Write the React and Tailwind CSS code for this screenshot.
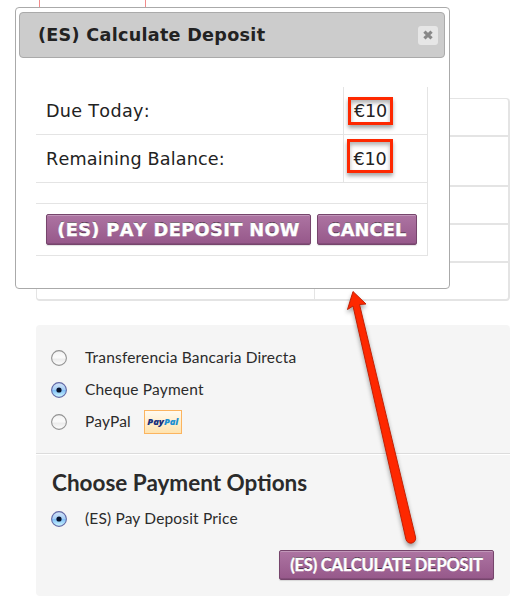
import React from 'react';

const PAYMENT_METHODS = [
  { id: 'bacs', label: 'Transferencia Bancaria Directa' },
  { id: 'cheque', label: 'Cheque Payment', checked: true },
  { id: 'paypal', label: 'PayPal', logo: true },
];

const BUTTON =
  'flex shrink-0 items-center justify-center whitespace-nowrap rounded-[2px] border border-[#76456c] bg-linear-to-b from-[#ad74a2] to-[#96588a] font-bold text-white shadow-[inset_0_1px_0_rgba(255,255,255,0.25),inset_0_-1px_0_rgba(0,0,0,0.12),0_1px_1px_rgba(0,0,0,0.12)] [-webkit-text-stroke:0.4px_white] [text-shadow:0_-1px_0_rgba(0,0,0,0.6)]';

const MARKER =
  'flex items-center justify-center border-[3px] border-[#fe2800] shadow-[0_3px_4px_rgba(0,0,0,0.35),inset_0_3px_4px_rgba(0,0,0,0.3)]';

function Radio({ checked }) {
  return (
    <svg className="h-4 w-4 shrink-0" viewBox="0 0 16 16" role="radio" aria-checked={Boolean(checked)}>
      <defs>
        <linearGradient id="radio-off" x1="0" y1="0" x2="0" y2="1">
          <stop offset="0" stopColor="#f0f0f0" />
          <stop offset="0.45" stopColor="#fbfbfb" />
          <stop offset="0.6" stopColor="#ececec" />
          <stop offset="1" stopColor="#ffffff" />
        </linearGradient>
        <linearGradient id="radio-on" x1="0" y1="0" x2="0" y2="1">
          <stop offset="0" stopColor="#d5e5f8" />
          <stop offset="0.48" stopColor="#a5cef6" />
          <stop offset="0.52" stopColor="#80bff6" />
          <stop offset="1" stopColor="#d4fbff" />
        </linearGradient>
      </defs>
      <circle
        cx="8"
        cy="8"
        r="7.4"
        fill={checked ? 'url(#radio-on)' : 'url(#radio-off)'}
        stroke={checked ? '#6268a5' : '#929292'}
        strokeWidth="1.1"
      />
      {checked ? <circle cx="8" cy="8" r="2.6" fill="#06122b" /> : null}
    </svg>
  );
}

function PaypalLogo() {
  return (
    <span className="ml-[13px] flex h-6 w-[38px] items-center justify-center border border-[#fbb45f] bg-linear-to-b from-[#fffaf0] to-[#ffe3ae] font-['Open_Sans',sans-serif] text-[9.5px] font-extrabold italic leading-none tracking-[-0.1px]">
      <span className="text-[#17307c]">Pay</span>
      <span className="text-[#1a8fd2]">Pal</span>
    </span>
  );
}

/** Order table that stays behind the dialog. */
function OrderTable() {
  return (
    <div className="ml-9 flex h-[203px] w-[474px] flex-col rounded-[4px] border border-r-2 border-b-2 border-[#e4e4e4]">
      <div className="h-[38px] border-b-2 border-[#e4e4e4]" />
      <div className="h-[50px] border-b-2 border-[#e4e4e4]" />
      <div className="h-[38px] border-b-2 border-[#e4e4e4]" />
      <div className="h-[38px] border-b-2 border-[#e4e4e4]" />
      <div className="ml-[277px] flex-1 border-l border-[#e4e4e4]" />
    </div>
  );
}

function PaymentBox() {
  return (
    <div className="ml-9 mt-6 h-[271px] w-[474px] rounded-[4px] bg-[#f5f5f5] font-[Lato,sans-serif] text-[#2b2b2b]">
      <ul className="flex h-[129px] flex-col border-b border-[#dcdcdc] pl-[15px] pt-[17px] text-[15.5px] tracking-[0.17px]">
        {PAYMENT_METHODS.map((m) => (
          <li key={m.id} className="flex h-8 items-center">
            <Radio checked={m.checked} />
            <span className="ml-[18px] whitespace-nowrap">{m.label}</span>
            {m.logo ? <PaypalLogo /> : null}
          </li>
        ))}
      </ul>
      <div className="border-t border-white pl-[15px] pr-4">
        <h3 className="h-12 whitespace-nowrap pl-px pt-3 text-[22.5px] font-bold leading-8">Choose Payment Options</h3>
        <div className="flex h-8 items-center text-[15.5px] tracking-[0.17px]">
          <Radio checked />
          <span className="ml-[18px] whitespace-nowrap">(ES) Pay Deposit Price</span>
        </div>
        <div className="mt-[15px] flex justify-end">
          <button className={`${BUTTON} h-[30px] w-[215px] text-[16.5px] tracking-[-0.2px]`}>(ES) CALCULATE DEPOSIT</button>
        </div>
      </div>
    </div>
  );
}

function DepositDialog() {
  return (
    <div
      className="absolute left-[15px] top-[7px] h-[282px] w-[435px] rounded-[4px] border border-[#aaa] bg-white py-1 pl-[3px] font-['DejaVu_Sans',sans-serif] text-[#222] [font-kerning:none]"
      role="dialog"
    >
      <div className="flex h-[46px] w-[426px] items-center justify-between rounded-[4px] border border-[#aaa] bg-[#ccc] pl-[18px] pr-[6px]">
        <span className="whitespace-nowrap text-[17.6px] font-bold tracking-[0.28px]">(ES) Calculate Deposit</span>
        <span className="flex h-[19px] w-[20px] items-center justify-center rounded-[3px] bg-[#e6e6e6]">
          <svg className="h-[10px] w-[10px]" viewBox="0 0 10 10">
            <path d="M1.4 1.6L8.6 8.4M8.6 1.6L1.4 8.4" stroke="#888" strokeWidth="3.2" />
          </svg>
        </span>
      </div>
      <div className="ml-[17px] mt-[29px] w-[392px] border-r border-[#e4e4e4] text-[17.6px] tracking-[0.22px]">
        <div className="flex h-12 border-b border-[#e4e4e4]">
          <div className="flex w-[307px] items-center pl-[10px] pt-0.5 tracking-[0.3px]">Due Today:</div>
          <div className="flex items-center border-l border-[#e4e4e4] pl-[4px]">
            <span className={`${MARKER} h-7 w-[45px] pt-0.5 tracking-[-0.2px]`}>€10</span>
          </div>
        </div>
        <div className="flex h-12 border-b border-[#e4e4e4]">
          <div className="flex w-[307px] items-center pl-[10px] pt-0.5 tracking-[0.17px]">Remaining Balance:</div>
          <div className="flex items-start border-l border-[#e4e4e4] pl-[3px] pt-[4px]">
            <span className={`${MARKER} h-[34px] w-[46px] pt-[7px] tracking-[-0.2px]`}>€10</span>
          </div>
        </div>
        <div className="h-[21px] border-b border-[#e4e4e4]" />
        <div className="flex h-[52px] gap-[6px] border-b border-[#e4e4e4] pl-[10px] pt-[10px]">
          <button className={`${BUTTON} h-[31px] w-[265px] pt-0.5 text-[17.8px] tracking-[0.35px]`}>(ES) PAY DEPOSIT NOW</button>
          <button className={`${BUTTON} h-[31px] w-[100px] pt-0.5 text-[17.8px] tracking-[0.1px]`}>CANCEL</button>
        </div>
      </div>
    </div>
  );
}

function Arrow() {
  return (
    <svg
      className="absolute left-[340px] top-[285px] h-[265px] w-[90px] drop-shadow-[0_3px_2px_rgba(0,0,0,0.35)]"
      viewBox="340 285 90 265"
    >
      <path
        d="M353 291.5L366 304L359.5 304.5L415.5 537A4.8 4.8 0 0 1 406 539.5L353 306L347.5 309.5Z"
        fill="#fe2800"
        stroke="#c32004"
        strokeWidth="1"
        strokeLinejoin="round"
      />
    </svg>
  );
}

export default function App() {
  return (
    <div className="relative h-[602px] w-[523px] overflow-hidden bg-white">
      <div className="mb-[90px] ml-[39px] h-2 w-[107px] border-x border-[#f28b8b]" />
      <OrderTable />
      <PaymentBox />
      <DepositDialog />
      <Arrow />
    </div>
  );
}
